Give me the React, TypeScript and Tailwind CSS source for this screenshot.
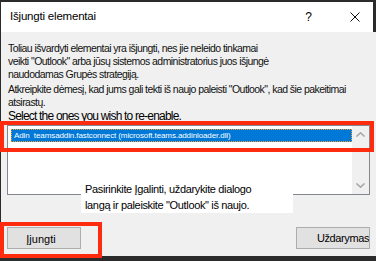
export default function App() {
  return (
    <div className="relative w-[376px] h-[261px] overflow-hidden bg-[#2b2b2b] font-['Liberation_Sans',Arial,sans-serif]">
      <div className="flex h-full flex-col pt-[2px] pl-[1px]">
        {/* Title bar */}
        <div className="mr-[3px] flex h-[30px] items-center bg-white pl-[9px]">
          <span className="text-[11.5px] tracking-[-0.2px] text-black">Išjungti elementai</span>
          <span className="ml-auto text-[12px] text-black">?</span>
          <svg className="ml-[38px] mr-[13px]" width="10" height="10" viewBox="0 0 10 10">
            <path d="M0.5 0.5 L9.5 9.5 M9.5 0.5 L0.5 9.5" stroke="#111" strokeWidth="1" fill="none" />
          </svg>
        </div>

        {/* Body */}
        <div className="flex flex-1 flex-col bg-[#f0f0f0] pl-[6px] pr-[6px] pt-[10px]">
          <p className="ml-[1px] text-[10.5px] leading-[13px] tracking-[-0.55px] text-[#111]">
            Toliau išvardyti elementai yra išjungti, nes jie neleido tinkamai
            <br />
            veikti "Outlook" arba jūsų sistemos administratorius juos išjungė
            <br />
            naudodamas Grupės strategiją.
          </p>
          <p className="ml-[1px] mt-[2px] text-[10.5px] leading-[13px] tracking-[-0.55px] text-[#111]">
            Atkreipkite dėmesį, kad jums gali tekti iš naujo paleisti "Outlook", kad šie pakeitimai
            <br />
            atsirastų.
          </p>
          <p className="ml-[1px] text-[12px] leading-[14px] tracking-[-0.8px] text-black">
            Select the ones you wish to re-enable.
          </p>

          {/* Listbox */}
          <div className="mt-[2px] flex h-[70px] border border-[#828790] bg-white">
            <div className="flex-1 pl-[3px] pt-[3px]">
              <div className="h-[13px] border border-dotted border-[#f0a030] bg-[#0078d7] pl-[2px] text-[8px] leading-[11px] tracking-[-0.1px] text-white">
                Adin&nbsp; teamsaddin.fastconnect (microsoft.teams.addinloader.dll)
              </div>
            </div>
            <div className="flex w-[17px] flex-col items-center justify-between bg-[#f0f0f0] py-[6px]">
              <svg width="9" height="5" viewBox="0 0 9 5">
                <path d="M0.5 4.5 L4.5 0.8 L8.5 4.5" stroke="#a3a3a3" strokeWidth="1.5" fill="none" />
              </svg>
              <svg width="9" height="5" viewBox="0 0 9 5">
                <path d="M0.5 0.5 L4.5 4.2 L8.5 0.5" stroke="#a3a3a3" strokeWidth="1.5" fill="none" />
              </svg>
            </div>
          </div>

          {/* Buttons */}
          <div className="mt-[32px] flex justify-between">
            <div className="flex h-[22px] w-[74px] items-center justify-center border border-[#adadad] bg-[#e1e1e1] pt-[2px] pr-[6px] text-[11px] text-black">
              Įjungti
            </div>
            <div className="flex h-[22px] w-[74px] items-center justify-end overflow-hidden whitespace-nowrap border border-[#adadad] bg-[#e1e1e1] text-[11px] tracking-[-0.4px] text-black">
              Uždarymas
            </div>
          </div>
        </div>
        <div className="h-[5px]" />
      </div>

      {/* Tooltip callout */}
      <div className="absolute left-[81px] top-[180px] h-[33px] w-[212px] bg-white pl-[4px] pt-[1px] text-[11px] leading-[16px] tracking-[-0.35px] text-black">
        Pasirinkite Įgalinti, uždarykite dialogo
        <br />
        langą ir paleiskite "Outlook" iš naujo.
      </div>

      {/* Red highlight boxes */}
      <div className="absolute left-0 top-[121px] h-[31px] w-[374px] border-4 border-[#fe2b0e]" />
      <div className="absolute left-0 top-[222px] h-[36px] w-[102px] border-4 border-[#fe2b0e]" />
    </div>
  );
}
